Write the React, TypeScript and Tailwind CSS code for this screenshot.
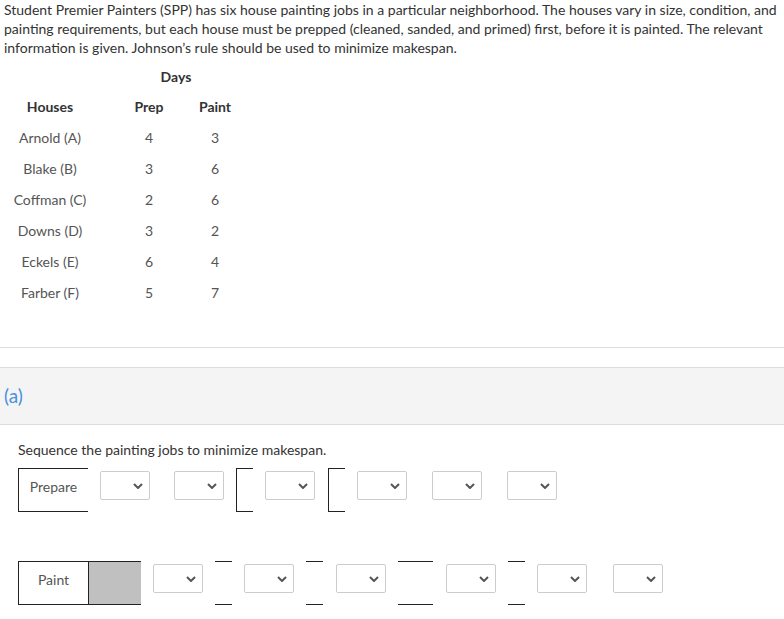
import React from "react";

const Chevron = () => (
  <svg width="10" height="6" viewBox="0 0 10 6" fill="none">
    <polyline points="1,1 5,5 9,1" stroke="#555" strokeWidth="2" fill="none" />
  </svg>
);

const Sel = ({ ml }: { ml: string }) => (
  <div
    className={`${ml} mt-[3px] w-[50px] h-[29px] border border-[#cccccc] rounded-[2px] bg-white flex items-center justify-end pr-[6px] shrink-0`}
  >
    <Chevron />
  </div>
);

const rows = [
  ["Arnold (A)", "4", "3"],
  ["Blake (B)", "3", "6"],
  ["Coffman (C)", "2", "6"],
  ["Downs (D)", "3", "2"],
  ["Eckels (E)", "6", "4"],
  ["Farber (F)", "5", "7"],
];

export default function App() {
  return (
    <div className="w-[784px] h-[619px] bg-white text-[14px] text-[#333] overflow-hidden" style={{ fontFamily: "Lato, 'Noto Sans', sans-serif" }}>
      <p className="pl-[4px] pr-[2px] leading-[19px]">
        Student Premier Painters (SPP) has six house painting jobs in a particular neighborhood. The houses vary in size, condition, and
        painting requirements, but each house must be prepped (cleaned, sanded, and primed) first, before it is painted. The relevant
        information is given. Johnson’s rule should be used to minimize makespan.
      </p>

      <div className="mt-[4px]">
        <div className="flex h-[30px] items-center">
          <div className="ml-[100px] w-[152px] text-center font-bold">Days</div>
        </div>
        <div className="flex h-[31px] items-center font-bold">
          <div className="w-[100px] text-center">Houses</div>
          <div className="w-[98px] text-center">Prep</div>
          <div className="w-[34px] text-center">Paint</div>
        </div>
        {rows.map((r) => (
          <div key={r[0]} className="flex h-[31px] items-center text-[#555]">
            <div className="w-[100px] text-center">{r[0]}</div>
            <div className="w-[98px] text-center">{r[1]}</div>
            <div className="w-[34px] text-center">{r[2]}</div>
          </div>
        ))}
      </div>

      <div className="mt-[39px] border-t border-[#dddddd]" />
      <div className="mt-[19px] h-[58px] bg-[#f4f4f4] border-t border-b border-[#dddddd] flex items-center pl-[4px] text-[19px] text-[#4a90d9]">
        (a)
      </div>

      <div className="mt-[15px] pl-[18px] leading-[19px]">Sequence the painting jobs to minimize makespan.</div>

      <div className="mt-[9px] flex items-start">
        <div className="ml-[18px] w-[70px] h-[44px] pb-[8px] border-l border-t border-b border-[#222] flex items-center justify-center text-[#555] shrink-0">
          Prepare
        </div>
        <Sel ml="ml-[12px]" />
        <Sel ml="ml-[24px]" />
        <div className="ml-[12px] w-[17px] h-[44px] border-l border-t border-b border-[#222] shrink-0" />
        <Sel ml="ml-[12px]" />
        <div className="ml-[13px] w-[17px] h-[44px] border-l border-t border-b border-[#222] shrink-0" />
        <Sel ml="ml-[12px]" />
        <Sel ml="ml-[25px]" />
        <Sel ml="ml-[25px]" />
      </div>

      <div className="mt-[49px] flex items-start">
        <div className="ml-[18px] w-[71px] h-[44px] pb-[8px] border border-[#222] flex items-center justify-center text-[#555] shrink-0">
          Paint
        </div>
        <div className="w-[52px] h-[44px] border-t border-b border-[#222] bg-[#c0c0c0] shrink-0" />
        <Sel ml="ml-[12px]" />
        <div className="ml-[12px] w-[17px] h-[44px] border-t border-b border-[#222] shrink-0" />
        <Sel ml="ml-[12px]" />
        <div className="ml-[12px] w-[17px] h-[44px] border-t border-b border-[#222] shrink-0" />
        <Sel ml="ml-[13px]" />
        <div className="ml-[12px] w-[35px] h-[44px] border-t border-b border-[#222] shrink-0" />
        <Sel ml="ml-[13px]" />
        <div className="ml-[12px] w-[17px] h-[44px] border-t border-b border-[#222] shrink-0" />
        <Sel ml="ml-[12px]" />
        <Sel ml="ml-[26px]" />
      </div>
    </div>
  );
}
